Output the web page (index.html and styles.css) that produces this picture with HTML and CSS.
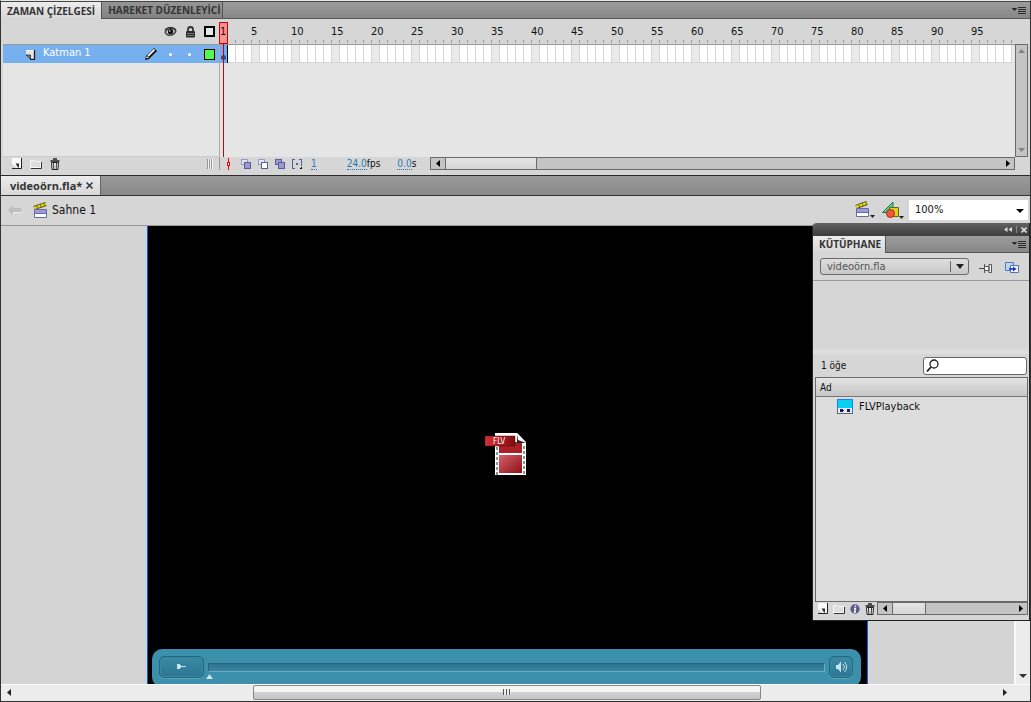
FILE: index.html
```html
<!DOCTYPE html>
<html lang="tr">
<head>
<meta charset="utf-8">
<title>videoörn.fla</title>
<link rel="stylesheet" href="styles.css">
</head>
<body>
<div class="app">
  <section class="timeline">
    <div class="tabs" role="tablist">
      <button class="tab tab-on" role="tab">ZAMAN ÇİZELGESİ</button>
      <button class="tab tab-off" role="tab">HAREKET DÜZENLEYİCİ</button>
      <button class="panel-menu" aria-label="Panel menüsü"><svg width="15" height="9" viewBox="0 0 15 9" shape-rendering="crispEdges"><path d="M0 2h5v1H4v1H3v1H2V4H1V3H0z" fill="#2b2b2b"/><path d="M6 1.500h8M6 3.500h8M6 5.500h8M6 7.500h8" stroke="#2b2b2b"/></svg></button>
    </div>
    <div class="time-grid">
      <div class="layer-head">
        <svg width="13" height="10" viewBox="0 0 13 10"><path d="M1 5C3 1 9 0 12 4c-2 5-9 6-11 1z" fill="#bbb" stroke="#333" stroke-width="1.2"/><circle cx="6.500" cy="4.700" r="2.600" fill="#111"/><path d="M1 3C4-.5 9-.5 12 3" stroke="#333" stroke-width="1.300" fill="none"/><circle cx="5.700" cy="4" r=".8" fill="#fff"/></svg>
        <svg width="11" height="12" viewBox="0 0 11 12"><path d="M3 6V3.500a2.500 2.500 0 0 1 5 0V6" fill="none" stroke="#333" stroke-width="1.800"/><rect x="1" y="5" width="9" height="6.500" rx="1" fill="#2a2a2a"/><path d="M2 7.500h7M2 9.500h7" stroke="#777"/></svg>
        <svg width="11" height="11" viewBox="0 0 11 11"><path d="M1 1h9v9H1z" fill="#e6e6e6" stroke="#000" stroke-width="2"/></svg>
      </div>
      <div class="ruler">
        <span>5</span><span>10</span><span>15</span><span>20</span><span>25</span><span>30</span><span>35</span><span>40</span><span>45</span><span>50</span><span>55</span><span>60</span><span>65</span><span>70</span><span>75</span><span>80</span><span>85</span><span>90</span><span>95</span>
      </div>
      <div class="ruler-end"></div>
      <div class="layers">
        <div class="layer">
          <svg width="11" height="11" viewBox="0 0 11 11"><path d="M1 1h8v9H5.500L1 6z" fill="#e4e4e4"/><path d="M1 1.500h8" stroke="#fff"/><path d="M9.500 1v9.500H5" stroke="#222" stroke-width="1.300" fill="none"/><path d="M1 6h4.500v4z" fill="#8a8a8a" stroke="#222" stroke-width=".8"/></svg>
          <span class="layer-name">Katman 1</span>
          <svg width="14" height="14" viewBox="0 0 14 14"><path d="M1 13l1-4 8-8 3 3-8 8z" fill="#111"/><path d="M4 9l6.500-6.500" stroke="#eee" stroke-width="1.800"/><path d="M2 11l1-2 2 2z" fill="#ddd"/></svg>
          <i class="dot"></i><i class="dot"></i><i class="outline-swatch"></i>
        </div>
      </div>
      <div class="frames"><div class="frame-row"><i class="keyframe"></i></div></div>
      <div class="vscroll">
        <svg width="7" height="4"><path d="M3.500 0L7 4H0z" fill="#858585"/></svg>
        <svg width="7" height="4"><path d="M0 0h7L3.500 4z" fill="#858585"/></svg>
      </div>
      <div class="playhead"><b>1</b></div>
    </div>
    <div class="time-foot">
      <div class="foot-left">
        <button aria-label="Yeni katman"><svg width="10" height="11" viewBox="0 0 10 11"><path d="M0 0h9v10H5L0 6z" fill="#fafafa"/><path d="M9.500 0v10.500H0" stroke="#222" fill="none"/><path d="M3.500 5.500h3.500v4H6z" fill="#333"/></svg></button>
        <button aria-label="Yeni klasör"><svg width="12" height="10" viewBox="0 0 12 10"><path d="M.5 1.500h4l1 1h5v6H.5z" fill="#dedede" stroke="#f6f6f6"/><path d="M1 9.500h10.500V3" fill="none" stroke="#333"/></svg></button>
        <button aria-label="Sil"><svg width="10" height="12" viewBox="0 0 10 12"><path d="M1.500 4.500h7L8 11.500H2z" fill="#eee" stroke="#222"/><path d="M.5 3h9M3 1h4" stroke="#222" stroke-width="1.500"/><path d="M3.500 5l.3 6M6.500 5l-.3 6" stroke="#333"/></svg></button>
        <span class="grip"></span>
      </div>
      <div class="foot-tools">
        <svg width="5" height="12" viewBox="0 0 5 12" shape-rendering="crispEdges"><path d="M2.500 0v12" stroke="red"/><path d="M1.500 4.500h2v3h-2z" fill="#fff" stroke="red"/></svg>
        <button aria-label="Soğan zarı"><svg width="11" height="11" viewBox="0 0 11 11" shape-rendering="crispEdges"><path d="M.5.5h6v5h-6z" fill="#e4e4f4" stroke="#9999c8"/><path d="M3.500 3.500h6v6h-6z" fill="#9a9ad0" stroke="#5c5c98"/></svg></button>
        <button aria-label="Soğan zarı ana hatları"><svg width="11" height="11" viewBox="0 0 11 11" shape-rendering="crispEdges"><path d="M.5.5h6v5h-6z" fill="#e4e4f4" stroke="#9999c8"/><path d="M3.500 3.500h6v6h-6z" fill="#fff" stroke="#5c5c98"/></svg></button>
        <button aria-label="Birden çok kare düzenle"><svg width="11" height="11" viewBox="0 0 11 11" shape-rendering="crispEdges"><path d="M.5.5h6v5h-6z" fill="#9a9ad0" stroke="#5c5c98"/><path d="M3.500 3.500h6v6h-6z" fill="#9a9ad0" stroke="#5c5c98"/></svg></button>
        <button aria-label="İşaretçileri değiştir"><svg width="11" height="11" viewBox="0 0 11 11" shape-rendering="crispEdges"><path d="M3 .5H.5v9H3M7 .5h2.500V7" fill="none" stroke="#5c5c98"/><path d="M4 4h2v2H4z" fill="#5c5c98"/><path d="M10 7v3H7z" fill="#000"/></svg></button>
        <button class="hot hot-frame">1</button>
        <span class="hot-rate"><button class="hot">24.0</button>fps</span>
        <span><button class="hot">0.0</button>s</span>
      </div>
      <div class="hbar">
        <button class="arrow" aria-label="Sola"><svg width="4" height="7"><path d="M4 0v7L0 3.500z"/></svg></button>
        <div class="thumb"></div>
        <button class="arrow arrow-end" aria-label="Sağa"><svg width="4" height="7"><path d="M0 0v7l4-3.500z"/></svg></button>
      </div>
    </div>
  </section>

  <div class="doc-tabs">
    <div class="doc-tab">videoörn.fla*<button aria-label="Kapat"><svg width="7" height="7" viewBox="0 0 7 7"><path d="M.5.5l6 6M6.500.5l-6 6" stroke="#333" stroke-width="1.500"/></svg></button></div>
  </div>

  <div class="scene-bar">
    <svg width="13" height="10" viewBox="0 0 13 10"><path d="M5 0v3h8v4H5v3L0 5z" fill="#bebebe"/><path d="M5.500 10V7.500H13" stroke="#eee" fill="none"/></svg>
    <svg class="scene-icon" width="15" height="16" viewBox="0 0 15 16"><path d="M1 6L13 2" stroke="#55520c" stroke-width="4"/><path d="M1 6L13 2" stroke="#e4d820" stroke-width="2.400" stroke-dasharray="3 .7"/><path d="M1.500 7.500h12v8h-12z" fill="#fff" stroke="#6868ac"/><path d="M2 8h11v3H2z" fill="#9c9cd8"/><path d="M1 11.500h13" stroke="#6868ac"/></svg>
    <span class="scene-name">Sahne 1</span>
    <button class="scene-menu" aria-label="Sahneyi düzenle"><svg width="20" height="17" viewBox="0 0 20 17"><path d="M1 6L12 2" stroke="#55520c" stroke-width="4"/><path d="M1 6L12 2" stroke="#e4d820" stroke-width="2.400" stroke-dasharray="3 .7"/><path d="M1.500 7.500h12v8h-12z" fill="#fff" stroke="#6868ac"/><path d="M2 8h11v3H2z" fill="#9c9cd8"/><path d="M1 11.500h13" stroke="#6868ac"/><path d="M15 14h5l-2.500 3z" fill="#222"/></svg></button>
    <button class="symbol-menu" aria-label="Sembolleri düzenle"><svg width="22" height="18" viewBox="0 0 22 18"><path d="M.5 11.500L11 1v10.500z" fill="#48d898" stroke="#1c7050"/><path d="M7.500 6.500h9v9h-9z" fill="#dcd018" stroke="#6c6818"/><circle cx="8.500" cy="12.500" r="4" fill="#f05838" stroke="#a82810"/><path d="M17 15h5l-2.500 3z" fill="#222"/></svg></button>
    <label class="zoom"><select aria-label="Yakınlaştırma"><option>100%</option></select></label>
  </div>

  <main class="work">
    <div class="pasteboard">
      <div class="canvas">
        <div class="clip">
          <svg width="42" height="43" viewBox="0 0 42 43">
            <defs>
              <linearGradient id="red" x1="0" y1="0" x2="1" y2="1"><stop offset="0" stop-color="#d86068"/><stop offset="1" stop-color="#8c1018"/></linearGradient>
              <linearGradient id="tag" x1="0" y1="0" x2="1" y2="0"><stop offset="0" stop-color="#d83038"/><stop offset="1" stop-color="#800c10"/></linearGradient>
            </defs>
            <path d="M10 0h22l9 9v33H10z" fill="#fff"/>
            <path d="M14 9h23v11H14z" fill="#a82028"/><path d="M14 22h23v18H14z" fill="url(#red)"/>
            <path d="M12 14v28M39 13v29" stroke="#222" stroke-dasharray="3 2"/>
            <path d="M32 2v8h9z" fill="#222"/><path d="M32 0l9 10-8-3z" fill="#fff"/>
            <path d="M0 3h30v10H0z" fill="url(#tag)" stroke="#5c0808" stroke-width=".5"/>
            <text class="flv" x="8" y="11">FLV</text>
          </svg>
        </div>
        <div class="player">
          <button class="play" aria-label="Oynat"><svg width="9" height="6" shape-rendering="crispEdges"><path d="M0 0h2l2 2h5v1H5L2 5H0z" fill="#c8e4ec"/></svg></button>
          <div class="seek"><i class="seek-track"></i><svg width="7" height="5"><path d="M3.500 0L7 5H0z" fill="#c8e4ec"/></svg></div>
          <button class="mute" aria-label="Ses"><svg width="13" height="12" viewBox="0 0 13 12"><path d="M1 4h2l3-3.500v11L3 8H1z" fill="#c8e4ec"/><path d="M8 3q3 3 0 6M9.500 1q4.500 5 0 10" fill="none" stroke="#c8e4ec"/></svg></button>
        </div>
      </div>
    </div>
    <div class="stage-v"><svg width="8" height="4"><path d="M0 0h8L4 4z" fill="#333"/></svg></div>
  </main>
  <div class="stage-h">
    <svg width="4" height="7"><path d="M4 0v7L0 3.500z" fill="#222"/></svg>
    <div class="stage-track"><div class="stage-thumb"><i></i></div></div>
    <svg width="4" height="7"><path d="M0 0v7l4-3.500z" fill="#222"/></svg>
  </div>
</div>

<aside class="library">
  <div class="lib-title">
    <button aria-label="Daralt"><svg width="8" height="5"><path d="M3.500 0v5L0 2.500zM8 0v5L4.500 2.500z" fill="#d8d8d8"/></svg></button>
    <i></i>
    <button aria-label="Kapat"><svg width="6" height="6"><path d="M.5.5l5 5M5.500.5l-5 5" stroke="#ddd" stroke-width="1.600"/></svg></button>
  </div>
  <div class="tabs">
    <button class="tab tab-on">KÜTÜPHANE</button>
    <button class="panel-menu" aria-label="Panel menüsü"><svg width="15" height="9" viewBox="0 0 15 9" shape-rendering="crispEdges"><path d="M0 2h5v1H4v1H3v1H2V4H1V3H0z" fill="#2b2b2b"/><path d="M6 1.500h8M6 3.500h8M6 5.500h8M6 7.500h8" stroke="#2b2b2b"/></svg></button>
  </div>
  <div class="lib-doc">
    <label class="doc-pick"><select aria-label="Belge"><option>videoörn.fla</option></select></label>
    <button aria-label="İğnele"><svg width="14" height="11" viewBox="0 0 14 11"><path d="M0 5.500h5" stroke="#444"/><path d="M5.500 1v9M6 3.500h4v4H6M10 1.500h2.500v8H10z" fill="#f4f4f4" stroke="#555"/></svg></button>
    <button aria-label="Yeni kütüphane"><svg width="15" height="12" viewBox="0 0 15 12"><path d="M.5.5h8v8h-8z" fill="#b8d8f8" stroke="#5878b8"/><path d="M5.500 3.500h8v7h-8z" fill="#f0f4ff" stroke="#5870a8"/><path d="M4 7h5" stroke="#1838d8" stroke-width="1.600"/><path d="M8 4.500v5L11.500 7z" fill="#1838d8"/></svg></button>
  </div>
  <div class="preview"></div>
  <div class="lib-find">
    <span>1 öğe</span>
    <label class="search"><svg width="13" height="13" viewBox="0 0 13 13"><circle cx="8" cy="5" r="4" fill="none" stroke="#222" stroke-width="1.300"/><path d="M5 8l-4 4.500" stroke="#222" stroke-width="1.800"/></svg><input type="text" aria-label="Ara"></label>
  </div>
  <div class="list">
    <div class="list-head">Ad</div>
    <div class="item">
      <svg width="16" height="15" viewBox="0 0 16 15" shape-rendering="crispEdges"><path d="M.5.500h15v14H.5z" fill="#e8ecf4" stroke="#1880f0"/><path d="M1 1h14v8H1z" fill="#08d0f0"/><path d="M0 10v4.500h16V10" fill="none" stroke="#666"/><path d="M3 10h1l3 1v1l-3 1H3zM10 10h3v3h-3z" fill="#101878"/></svg>
      <span>FLVPlayback</span>
    </div>
  </div>
  <div class="lib-foot">
    <button aria-label="Yeni sembol"><svg width="10" height="11" viewBox="0 0 10 11"><path d="M0 0h9v10H5L0 6z" fill="#fafafa"/><path d="M9.500 0v10.500H0" stroke="#222" fill="none"/><path d="M3.500 5.500h3.500v4H6z" fill="#333"/></svg></button>
    <button aria-label="Yeni klasör"><svg width="12" height="10" viewBox="0 0 12 10"><path d="M.5 1.500h4l1 1h5v6H.5z" fill="#dedede" stroke="#f6f6f6"/><path d="M1 9.500h10.500V3" fill="none" stroke="#333"/></svg></button>
    <button aria-label="Özellikler"><svg width="10" height="10" viewBox="0 0 10 10"><circle cx="5" cy="5" r="4.700" fill="#5c5c8c"/><path d="M5.500 1.500v1.500M4 4.500h1.500L4.500 8H6" stroke="#fff" stroke-width="1.300" fill="none"/></svg></button>
    <button aria-label="Sil"><svg width="10" height="12" viewBox="0 0 10 12"><path d="M1.500 4.500h7L8 11.500H2z" fill="#eee" stroke="#222"/><path d="M.5 3h9M3 1h4" stroke="#222" stroke-width="1.500"/><path d="M3.500 5l.3 6M6.500 5l-.3 6" stroke="#333"/></svg></button>
    <div class="hbar">
      <button class="arrow" aria-label="Sola"><svg width="4" height="7"><path d="M4 0v7L0 3.500z"/></svg></button>
      <div class="thumb"></div>
      <button class="arrow arrow-end" aria-label="Sağa"><svg width="4" height="7"><path d="M0 0v7l4-3.500z"/></svg></button>
    </div>
  </div>
</aside>
</body>
</html>
```
FILE: styles.css
```css
* { box-sizing: border-box; }
body {
  margin: 0;
  background: #d6d6d6;
  color: #111;
  font: 11px/14px "DejaVu Sans Condensed", "DejaVu Sans", sans-serif;
}
button, select, input { font: inherit; color: inherit; border: 0; padding: 0; margin: 0; background: none; }
button { display: flex; align-items: center; justify-content: center; }
svg { display: block; flex: none; }

.app {
  display: flex;
  flex-direction: column;
  height: 100vh;
  border: 1px solid #333;
  border-top-color: #e6ebe6;
}

/* panel tabs */
.tabs {
  display: flex;
  height: 18px;
  background: linear-gradient(#9c9c9c, #878787);
  border-top: 1px solid #444;
  border-bottom: 1px solid #555;
}
.tab {
  padding: 0 6px;
  font: bold 10px/16px "Open Sans", "Noto Sans", sans-serif;
  color: #333;
  border-right: 1px solid #555;
}
.tab-on { background: linear-gradient(#ececec, #d6d6d6); margin-bottom: -1px; }
.tab-off { padding-right: 1px; background: linear-gradient(#959595, #828282); }
.panel-menu { margin-left: auto; padding-right: 3px; }

/* timeline */
.timeline { flex: none; border-bottom: 1px solid #2b2b2b; }
.time-grid {
  position: relative;
  display: grid;
  grid-template-columns: 219px 1fr 15px;
  grid-template-rows: 25px 113px;
}
.layer-head {
  display: flex;
  align-items: center;
  justify-content: flex-end;
  gap: 8px;
  padding-right: 5px;
}
.ruler {
  display: flex;
  overflow: hidden;
  padding: 6px 0 0 31px;
  background: repeating-linear-gradient(90deg, transparent 0 7px, #999 7px 8px) 8px 21px / 100% 3px no-repeat;
}
.ruler span { flex: 0 0 40px; }
.layers {
  margin-left: 2px;
  border-top: 1px solid #999;
  border-right: 1px solid #aaa;
  border-bottom: 1px solid #ccc;
  background: #e5e5e5;
}
.layer {
  display: flex;
  align-items: center;
  height: 18px;
  padding: 0 4px 0 22px;
  background: #76b0ee;
  color: #fff;
}
.layer-name { flex: 1; padding-left: 7px; line-height: 16px; align-self: flex-start; }
.dot { width: 3px; height: 3px; margin-left: 16px; border-radius: 50%; background: #fff; }
.layer svg + .dot { margin-left: 11px; }
.outline-swatch { width: 11px; height: 11px; margin-left: 13px; border: 1px solid #000; background: #4cff4c; }
.frames { border-top: 1px solid #999; background: #e5e5e5; overflow: hidden; }
.frame-row {
  height: 18px;
  border-bottom: 1px solid #d6d6d6;
  background:
    repeating-linear-gradient(90deg, transparent 0 7px, #d6d6d6 7px 8px),
    repeating-linear-gradient(90deg, #fff 0 32px, #eaeaea 32px 40px);
}
.keyframe {
  display: flex;
  align-items: flex-end;
  justify-content: center;
  width: 8px;
  height: 18px;
  padding-bottom: 3px;
  border-right: 1px solid #000;
  background: #6cacf4;
}
.keyframe::after { content: ""; width: 5px; height: 5px; border-radius: 50%; background: #1c5898; }
.playhead {
  position: absolute;
  left: 218px;
  top: 3px;
  bottom: 0;
  width: 9px;
  background: linear-gradient(#c00, #c00) 4px 0 / 1px 100% no-repeat;
}
.playhead b {
  display: block;
  height: 22px;
  border: 1px solid #c00;
  background: #ff9090;
  font-weight: normal;
  line-height: 18px;
}
.vscroll {
  display: flex;
  flex-direction: column;
  align-items: center;
  justify-content: space-between;
  width: 13px;
  padding: 4px 0;
  border: 1px solid #6a6a6a;
  background: #c4c4c4;
}

.time-foot { display: flex; height: 18px; padding-right: 15px; }
.foot-left {
  display: flex;
  align-items: center;
  gap: 8px;
  width: 219px;
  height: 13px;
  padding: 0 6px 0 11px;
  border-right: 1px solid #999;
}
.grip {
  width: 6px;
  height: 10px;
  margin-left: auto;
  background: repeating-linear-gradient(90deg, #999 0 1px, #f4f4f4 1px 2px);
}
.foot-tools {
  display: flex;
  align-items: center;
  gap: 6px;
  width: 210px;
  height: 14px;
  padding-left: 6px;
  font-size: 10px;
  line-height: 12px;
}
.foot-tools > svg { margin-right: 4px; }
.hot { display: inline-block; color: #2878b0; border-bottom: 1px dotted #2878b0; line-height: 11px; }
.hot-frame { margin-left: 2px; }
.hot-rate { margin: 0 11px 0 24px; }

.hbar {
  display: flex;
  flex: 1;
  height: 13px;
  border: 1px solid #6a6a6a;
  background: #c4c4c4;
}
.hbar .arrow { width: 14px; }
.hbar .arrow-end { width: 12px; margin-left: auto; }
.thumb { width: 92px; border: 1px solid #6a6a6a; border-width: 0 1px; background: linear-gradient(#e4e4e4, #d6d6d6); }
.lib-foot .thumb { width: 34px; }

/* document bar */
.doc-tabs {
  flex: none;
  display: flex;
  height: 20px;
  border-bottom: 1px solid #333;
  background: linear-gradient(#9a9a9a, #888);
}
.doc-tab {
  display: flex;
  align-items: center;
  gap: 4px;
  padding: 0 7px 0 9px;
  border-right: 1px solid #666;
  background: linear-gradient(#ececec, #d8d8d8);
  color: #333;
  font: bold 11px/18px "Open Sans", "Noto Sans", sans-serif;
}
.scene-bar {
  flex: none;
  display: flex;
  align-items: center;
  height: 30px;
  padding: 0 2px 2px 7px;
  border-bottom: 1px solid #999;
}
.scene-icon { margin: 0 4px 0 12px; }
.scene-name { font-size: 12px; }
.scene-menu { margin-left: auto; }
.symbol-menu { margin: 0 5px 0 7px; }
.zoom { position: relative; width: 119px; height: 20px; background: #fff; }
.zoom select, .doc-pick select { appearance: none; width: 100%; height: 100%; padding-left: 6px; }
.zoom::after {
  content: "";
  position: absolute;
  right: 4px;
  top: 9px;
  border: 4px solid transparent;
  border-top-color: #000;
  border-bottom: 0;
}

/* stage */
.work { flex: 1; display: flex; min-height: 0; }
.pasteboard { flex: 1; display: flex; padding: 0 146px; background: #d4d4d4; overflow: hidden; }
.canvas {
  flex: 1;
  display: flex;
  flex-direction: column;
  border: 1px solid #0060f0;
  border-width: 0 1px;
  background: #000;
  overflow: hidden;
}
.clip { flex: 1; display: flex; align-items: center; justify-content: center; padding: 34px 3px 0 0; }
.flv { font: 8px "DejaVu Sans Condensed", sans-serif; fill: #fff; }
.player {
  display: flex;
  height: 38px;
  margin: 0 6px -3px 4px;
  padding: 7px 8px 0 7px;
  border-radius: 10px;
  background: #3d90ac;
}
.play, .mute {
  width: 45px;
  height: 22px;
  border: 1px solid #20687e;
  border-radius: 5px;
  background: linear-gradient(#3a8ba6, #2d7590);
  box-shadow: inset 0 0 0 1px #3a88a2, 0 1px 0 #58a4bc;
}
.mute { width: 24px; }
.seek { flex: 1; padding: 7px 4px 0 2px; }
.seek-track {
  display: block;
  height: 9px;
  margin-left: 2px;
  border: 1px solid #24667c;
  border-right-color: #68acc4;
  border-bottom-color: #68acc4;
  background: linear-gradient(#2e7490, #3a84a2);
}
.seek svg { margin-top: 2px; }
.stage-v {
  display: flex;
  align-items: flex-end;
  justify-content: center;
  width: 16px;
  padding: 0 1px 6px 0;
  border-left: 2px solid #fafafa;
  background: #ececec;
}
.stage-h {
  flex: none;
  display: flex;
  align-items: center;
  gap: 6px;
  height: 17px;
  padding: 0 23px 2px 6px;
  border-top: 1px solid #fafafa;
  background: #ececec;
}
.stage-track { flex: 1; padding: 0 236px; }
.stage-thumb {
  display: flex;
  align-items: center;
  justify-content: center;
  height: 15px;
  border: 1px solid #888;
  border-radius: 2px;
  background: linear-gradient(#f4f4f4 45%, #d2d2d4 46%, #c4c4c8);
}
.stage-thumb i { width: 8px; height: 6px; background: repeating-linear-gradient(90deg, #555 0 1px, #eee 1px 3px); }

/* floating library window */
.library {
  position: absolute;
  right: 1px;
  top: 223px;
  width: 218px;
  border: 1px solid #222;
  border-top: 0;
  border-radius: 5px 0 0 0;
  background: #d6d6d6;
  overflow: hidden;
}
.lib-title {
  display: flex;
  align-items: center;
  justify-content: flex-end;
  gap: 4px;
  height: 13px;
  padding-right: 2px;
  background: linear-gradient(#626262, #3c3c3c);
}
.lib-title i { width: 1px; height: 7px; background: #888; }
.library .tab { padding-right: 4px; line-height: 15px; }
.library .panel-menu { padding-right: 2px; }
.library .tabs { height: 17px; border-top: 0; }
.lib-doc { display: flex; align-items: center; gap: 10px; height: 28px; padding-left: 7px; border-bottom: 1px solid #999; }
.lib-doc button { padding-top: 3px; }
.lib-doc button:last-child { margin-left: 2px; }
.doc-pick {
  position: relative;
  width: 149px;
  height: 17px;
  border: 1px solid #6a6a6a;
  border-radius: 3px;
  background: linear-gradient(#dedede, #c8c8c8);
  color: #555;
}
.doc-pick::before { content: ""; position: absolute; right: 17px; top: 2px; bottom: 2px; width: 1px; background: #666; }
.doc-pick::after {
  content: "";
  position: absolute;
  right: 4px;
  top: 5px;
  border: 4px solid transparent;
  border-top: 5px solid #222;
  border-bottom: 0;
}
.preview { height: 73px; border-bottom: 5px solid #c8c8c8; border-image: linear-gradient(#c4c4c4, #dedede) 5; border-image-width: 0 0 5px; }
.lib-find { display: flex; align-items: center; justify-content: space-between; height: 23px; padding: 0 2px 0 8px; font-size: 10px; }
.search {
  display: flex;
  align-items: center;
  width: 104px;
  height: 18px;
  padding-left: 2px;
  border: 1px solid #666;
  border-radius: 3px;
  background: #fff;
}
.search input { flex: 1; min-width: 0; outline: 0; }
.list { height: 225px; margin: 0 1px 0 2px; border: 1px solid #6a6a6a; background: #ddd; }
.list-head {
  height: 19px;
  padding-left: 4px;
  border-bottom: 1px solid #777;
  background: linear-gradient(#e4e4e4, #c6c6c6);
  font-size: 10px;
  line-height: 19px;
}
.item { display: flex; align-items: center; gap: 6px; height: 19px; padding-left: 21px; }
.lib-foot { display: flex; gap: 5px; height: 18px; padding: 0 1px 0 5px; }
.lib-foot > button { height: 13px; }
.lib-foot > .hbar { margin-left: -3px; }
```
